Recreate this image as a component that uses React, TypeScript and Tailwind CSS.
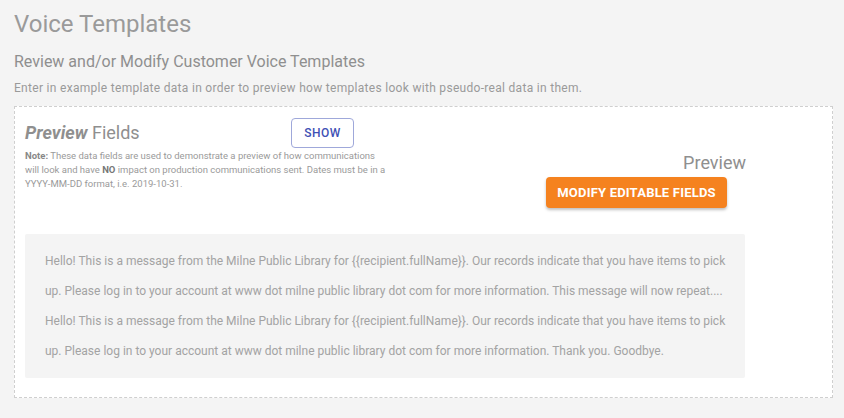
export default function App() {
  const message = [
    "Hello! This is a message from the Milne Public Library for {{recipient.fullName}}. Our records indicate that you have items to pick up. Please log in to your account at www dot milne public library dot com for more information. This message will now repeat....",
    "Hello! This is a message from the Milne Public Library for {{recipient.fullName}}. Our records indicate that you have items to pick up. Please log in to your account at www dot milne public library dot com for more information. Thank you. Goodbye.",
  ];

  return (
    <div className="min-h-[418px] bg-[#f4f4f4] px-[14px] pt-[8px] font-['Roboto',sans-serif]">
      <h1 className="text-[24px] leading-[32px] text-[#9a9a9a]">Voice Templates</h1>
      <h2 className="mt-[11px] text-[16px] leading-[22px] text-[#8f8f8f]">
        Review and/or Modify Customer Voice Templates
      </h2>
      <p className="mt-[7px] text-[12px] leading-[16px] tracking-[0.3px] text-[#9a9a9a]">
        Enter in example template data in order to preview how templates look with pseudo-real data in them.
      </p>

      {/* Preview card */}
      <div className="mt-[10px] w-[819px] border border-dashed border-[#cfcfcf] bg-white pl-[10px] pt-[11px] pb-[19px]">
        <div className="flex w-[721px] items-start">
          <div className="w-[363px] shrink-0">
            <div className="flex w-[329px] items-center">
              <h3 className="text-[18px] leading-[22px] text-[#8f8f8f]">
                <span className="font-bold italic">Preview</span> Fields
              </h3>
              <button className="ml-auto h-[30px] w-[63px] rounded-[4px] border border-[#9fa8da] text-[12px] font-medium tracking-[0.5px] text-[#3f51b5]">
                SHOW
              </button>
            </div>
            <p className="mt-[1px] text-[9.5px] leading-[14px] text-[#9a9a9a]">
              <span className="font-bold text-[#888]">Note:</span> These data fields are used to demonstrate a preview of how communications will look and have <span className="font-bold text-[#777]">NO</span> impact on production communications sent. Dates must be in a YYYY-MM-DD format, i.e. 2019-10-31.
            </p>
          </div>
          <div className="flex flex-1 flex-col items-end pt-[34px]">
            <div className="text-[18px] leading-[21px] text-[#8f8f8f]">Preview</div>
            <button className="mr-[19px] mt-[4px] h-[31px] w-[181px] rounded-[4px] bg-[#f5821f] text-[13px] font-bold tracking-[0.2px] text-white shadow-[0_2px_3px_rgba(0,0,0,0.25)]">
              MODIFY EDITABLE FIELDS
            </button>
          </div>
        </div>

        <div className="mt-[26px] w-[720px] rounded-[2px] bg-[#f4f4f4] pl-[20px] pr-[12px] py-[12px] text-[12px] leading-[30px] text-[#a3a3a3]">
          {message.map((m, i) => (
            <p key={i}>{m}</p>
          ))}
        </div>
      </div>
    </div>
  );
}
